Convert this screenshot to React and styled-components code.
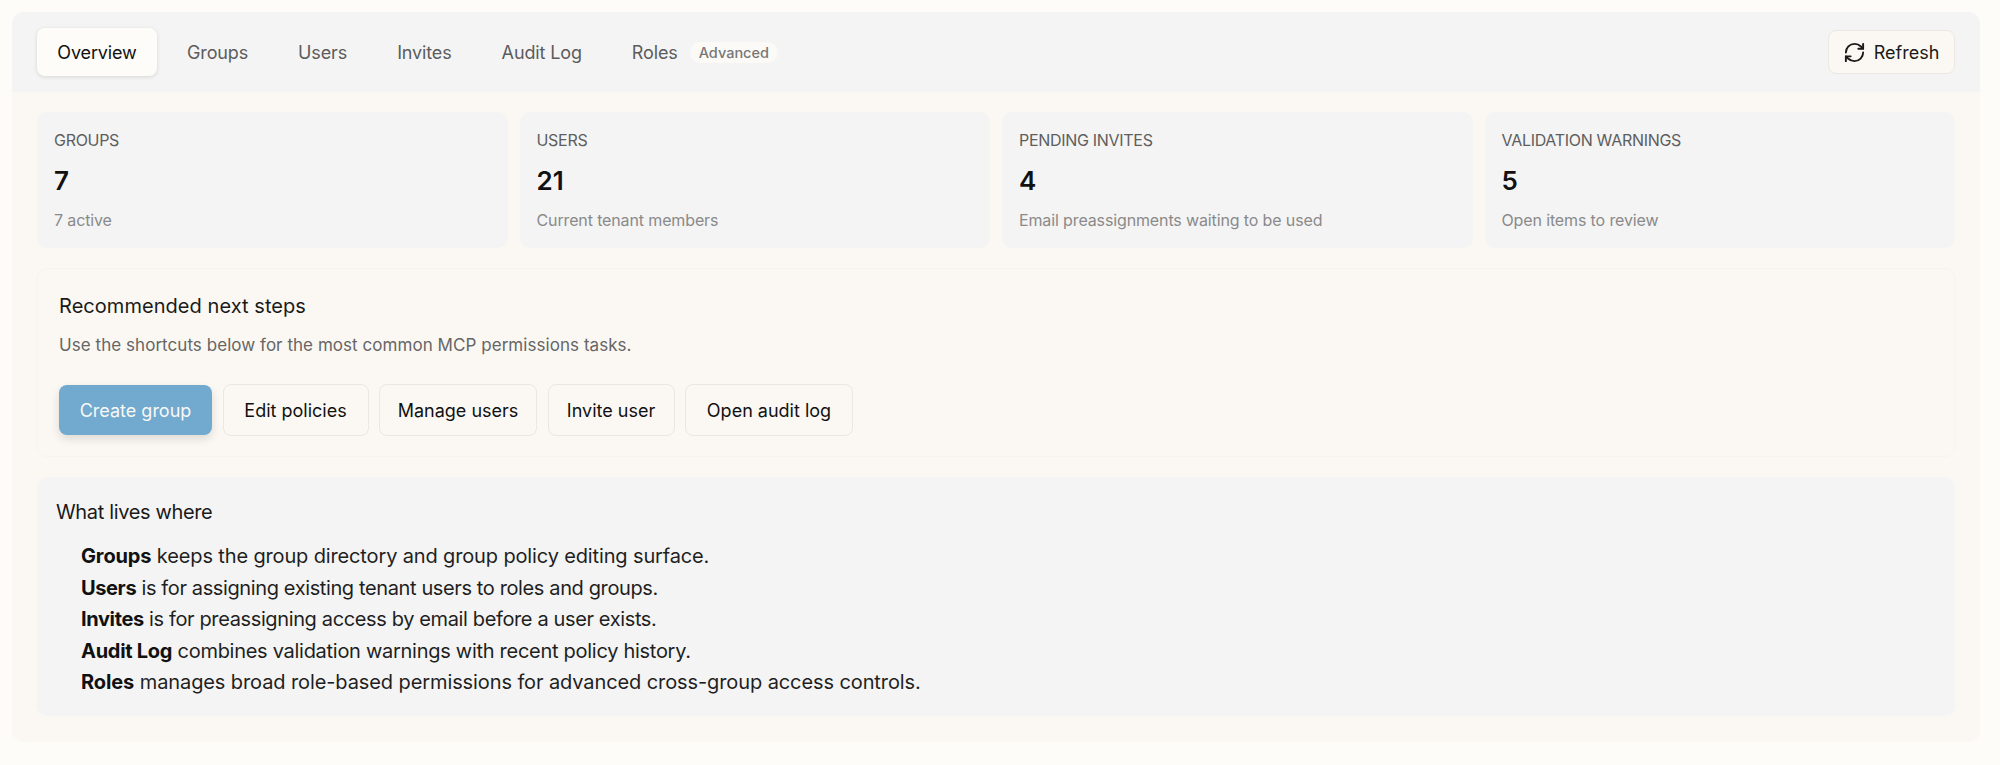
import React from 'react';
import styled, { createGlobalStyle } from 'styled-components';
import { RefreshCw } from 'lucide-react';

const GlobalStyle = createGlobalStyle`
  html, body {
    margin: 0;
    padding: 0;
    background-color: #fdfcf8;
    color: #1a1a1a;
    font-family: Inter, "Liberation Sans", sans-serif;
  }
`;

const Page = styled.div`
  padding: 12px 20px 23px 12px;
`;

const Shell = styled.div`
  background-color: #fbf8f3;
  border-radius: 12px;
  overflow: hidden;
  height: 730px;
`;

const TabBar = styled.nav`
  height: 80px;
  box-sizing: border-box;
  background-color: #f4f4f5;
  padding: 0 25px;
  display: flex;
  align-items: center;
  justify-content: space-between;
`;

const Tabs = styled.div`
  display: flex;
  align-items: center;
  gap: 10px;
`;

const Tab = styled.div`
  height: 48px;
  min-width: ${props => props.$active ? '120px' : '0'};
  box-sizing: border-box;
  padding: 1px 20px 0;
  display: flex;
  align-items: center;
  justify-content: center;
  gap: 12px;
  border-radius: 8px;
  font-size: 18px;
  letter-spacing: -0.13px;
  color: ${props => props.$active ? '#111' : '#5c5c5c'};
  background-color: ${props => props.$active ? '#fdfcf9' : 'transparent'};
  box-shadow: ${props => props.$active ? '0 1px 4px rgba(0, 0, 0, 0.12)' : 'none'};
`;

const Badge = styled.span`
  padding: 0 9px;
  height: 21px;
  display: flex;
  align-items: center;
  border-radius: 11px;
  background-color: #fbfaf6;
  color: #777;
  font-size: 14.5px;
  font-weight: 500;
  letter-spacing: 0;
`;

const RefreshButton = styled.button`
  height: 44px;
  width: 127px;
  padding: 0 1px 0 0;
  display: flex;
  align-items: center;
  justify-content: center;
  gap: 8px;
  background-color: #fbf8f3;
  border: 1px solid #ebe8e4;
  border-radius: 8px;
  color: #1a1a1a;
  font-family: inherit;
  font-size: 18px;
`;

const Content = styled.div`
  padding: 20px 25px 25px;
  display: flex;
  flex-direction: column;
`;

const StatGrid = styled.div`
  display: grid;
  grid-template-columns: repeat(4, 1fr);
  gap: 12px;
`;

const StatCard = styled.div`
  height: 136px;
  box-sizing: border-box;
  padding: 18px 17px 0;
  background-color: #f4f4f4;
  border-radius: 10px;
`;

const StatLabel = styled.div`
  font-size: 16px;
  line-height: 21px;
  letter-spacing: -0.3px;
  color: #5e5e5e;
  text-transform: uppercase;
`;

const StatValue = styled.div`
  margin-top: 14px;
  font-size: 26px;
  line-height: 32px;
  font-weight: 600;
  color: #111;
`;

const StatNote = styled.div`
  margin-top: 13px;
  font-size: 16px;
  line-height: 20px;
  letter-spacing: -0.13px;
  color: #8a8a8a;
`;

const NextSteps = styled.section`
  margin-top: 20px;
  height: 189px;
  box-sizing: border-box;
  padding: 24px 21px 0;
  border: 1px solid #f7f4ef;
  border-radius: 10px;
`;

const SectionTitle = styled.h3`
  margin: 0;
  font-size: 20px;
  line-height: 26px;
  font-weight: 400;
  letter-spacing: 0.05px;
  color: #1a1a1a;
`;

const GuideTitle = styled(SectionTitle)`
  letter-spacing: -0.35px;
`;

const SectionNote = styled.p`
  margin: 14px 0 0;
  font-size: 17px;
  line-height: 24px;
  letter-spacing: 0.05px;
  color: #666;
`;

const Actions = styled.div`
  margin-top: 27px;
  display: flex;
  align-items: center;
  gap: 10.5px;
`;

const ActionButton = styled.button`
  height: ${props => props.$primary ? '50px' : '52px'};
  width: ${props => props.$width}px;
  padding: 0;
  font-family: inherit;
  font-size: 18px;
  border-radius: 8px;
  border: ${props => props.$primary ? 'none' : '1px solid #ebe8e4'};
  background-color: ${props => props.$primary ? '#72a9cf' : '#fbf8f3'};
  color: ${props => props.$primary ? '#f8f8f5' : '#111'};
  box-shadow: ${props => props.$primary ? '0 4px 10px rgba(0, 0, 0, 0.12)' : 'none'};
`;

const Guide = styled.section`
  margin-top: 20px;
  height: 239px;
  box-sizing: border-box;
  padding: 22px 19px 0;
  background-color: #f4f4f4;
  border-radius: 10px;
`;

const GuideList = styled.ul`
  margin: 16px 0 0;
  padding: 0 0 0 25px;
  list-style: none;
`;

const GuideItem = styled.li`
  font-size: 20px;
  line-height: 31.6px;
  letter-spacing: ${props => props.$tracking}px;
  color: #1f1f1f;
  strong {
    font-weight: 700;
    color: #111;
  }
`;

const tabs = ['Groups', 'Users', 'Invites', 'Audit Log'];

const stats = [
  { label: 'Groups', value: '7', note: '7 active' },
  { label: 'Users', value: '21', note: 'Current tenant members' },
  { label: 'Pending invites', value: '4', note: 'Email preassignments waiting to be used' },
  { label: 'Validation warnings', value: '5', note: 'Open items to review' },
];

const actions = [
  { label: 'Edit policies', width: 146 },
  { label: 'Manage users', width: 158 },
  { label: 'Invite user', width: 127 },
  { label: 'Open audit log', width: 168 },
];

const guide = [
  { name: 'Groups', text: 'keeps the group directory and group policy editing surface.', tracking: -0.14 },
  { name: 'Users', text: 'is for assigning existing tenant users to roles and groups.', tracking: -0.38 },
  { name: 'Invites', text: 'is for preassigning access by email before a user exists.', tracking: -0.37 },
  { name: 'Audit Log', text: 'combines validation warnings with recent policy history.', tracking: -0.28 },
  { name: 'Roles', text: 'manages broad role-based permissions for advanced cross-group access controls.', tracking: -0.1 },
];

const App = () => {
  return (
    <Page>
      <GlobalStyle />
      <Shell>
        <TabBar>
          <Tabs>
            <Tab $active>Overview</Tab>
            {tabs.map(tab => <Tab key={tab}>{tab}</Tab>)}
            <Tab>Roles<Badge>Advanced</Badge></Tab>
          </Tabs>
          <RefreshButton><RefreshCw size={23} strokeWidth={2} />Refresh</RefreshButton>
        </TabBar>
        <Content>
          <StatGrid>
            {stats.map(stat => (
              <StatCard key={stat.label}>
                <StatLabel>{stat.label}</StatLabel>
                <StatValue>{stat.value}</StatValue>
                <StatNote>{stat.note}</StatNote>
              </StatCard>
            ))}
          </StatGrid>
          <NextSteps>
            <SectionTitle>Recommended next steps</SectionTitle>
            <SectionNote>Use the shortcuts below for the most common MCP permissions tasks.</SectionNote>
            <Actions>
              <ActionButton $primary $width={153}>Create group</ActionButton>
              {actions.map(action => (
                <ActionButton key={action.label} $width={action.width}>{action.label}</ActionButton>
              ))}
            </Actions>
          </NextSteps>
          <Guide>
            <GuideTitle>What lives where</GuideTitle>
            <GuideList>
              {guide.map(item => (
                <GuideItem key={item.name} $tracking={item.tracking}><strong>{item.name}</strong> {item.text}</GuideItem>
              ))}
            </GuideList>
          </Guide>
        </Content>
      </Shell>
    </Page>
  );
};

export default App;
